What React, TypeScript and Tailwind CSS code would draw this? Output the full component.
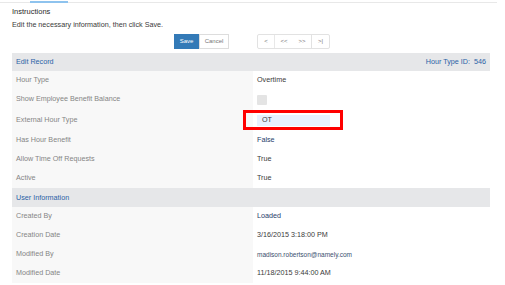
import React from "react";

const Row: React.FC<{
  label: string;
  h?: string;
  children?: React.ReactNode;
}> = ({ label, h = "h-[19px]", children }) => {
  return (
    <div className={`relative flex ${h}`}>
      <div className="w-[241px] bg-[#f8f8f8] flex items-center pl-[4px] text-[#858585]">
        {label}
      </div>
      <div className="flex-1 flex items-center pl-[4px] text-[#3a3a3a]">
        {children}
      </div>
    </div>
  );
};

const Section: React.FC<{ title: string; right?: React.ReactNode }> = ({
  title,
  right,
}) => {
  return (
    <div className="h-[18px] bg-[#e6e7e9] flex items-center justify-between px-[4px] text-[#2a62a6]">
      <span>{title}</span>
      {right}
    </div>
  );
};

export default function App() {
  return (
    <div className="w-[505px] h-[285px] overflow-hidden bg-white text-[7.2px] font-['Liberation_Sans',Arial,sans-serif]">
      <div className="relative w-[497px] h-[3px] border-b border-[#e8e8e8]">
        <div className="absolute left-[30px] top-[1px] w-[38px] h-[2px] bg-[#8ec3ee]" />
      </div>
      <div className="px-[12px]">
        <div className="pt-[3px] text-[7.5px] text-[#2a2a2a]">Instructions</div>
        <div className="pt-[3px] text-[#3a3a3a]">
          Edit the necessary information, then click Save.
        </div>
        <div className="flex mt-[3px] h-[15px]">
          <div className="ml-[162px] flex">
            <button className="w-[25px] bg-[#337ab7] text-white text-[6px]">
              Save
            </button>
            <button className="w-[30px] border border-[#ddd] text-[#777] text-[6px]">
              Cancel
            </button>
          </div>
          <div className="ml-[28px] flex border border-[#e2e2e2] rounded-[2px] text-[#777] text-[6px]">
            <span className="w-[17px] flex items-center justify-center border-r border-[#e8e8e8]">
              &lt;
            </span>
            <span className="w-[18px] flex items-center justify-center">
              &lt;&lt;
            </span>
            <span className="w-[19px] flex items-center justify-center border-r border-[#e2e2e2]">
              &gt;&gt;
            </span>
            <span className="w-[17px] flex items-center justify-center">
              &gt;|
            </span>
          </div>
        </div>
        <div className="mt-[4px] w-[478px]">
          <Section
            title="Edit Record"
            right={<span>Hour Type ID:&nbsp; 546</span>}
          />
          <Row label="Hour Type">Overtime</Row>
          <Row label="Show Employee Benefit Balance">
            <span className="w-[10px] h-[10px] bg-[#e4e4e4] rounded-[1px]" />
          </Row>
          <Row label="External Hour Type" h="h-[22px]">
            <div className="w-[73px] h-[11px] bg-[#e8f0fe] flex items-center pl-[5px]">
              OT
            </div>
            <div className="absolute left-[231px] top-[1px] w-[100px] h-[20px] border-[3px] border-[#ff0000]" />
          </Row>
          <Row label="Has Hour Benefit">
            <span className="text-[#1f3d6b]">False</span>
          </Row>
          <Row label="Allow Time Off Requests">True</Row>
          <Row label="Active">True</Row>
          <div className="h-px bg-[#e6e7e9]" />
          <Section title="User Information" />
          <Row label="Created By">
            <span className="text-[#1f3d6b]">Loaded</span>
          </Row>
          <Row label="Creation Date">3/16/2015 3:18:00 PM</Row>
          <Row label="Modified By">
            <span className="text-[#3b4f6e] text-[6.5px]">
              madison.robertson@namely.com
            </span>
          </Row>
          <Row label="Modified Date">11/18/2015 9:44:00 AM</Row>
        </div>
      </div>
    </div>
  );
}
